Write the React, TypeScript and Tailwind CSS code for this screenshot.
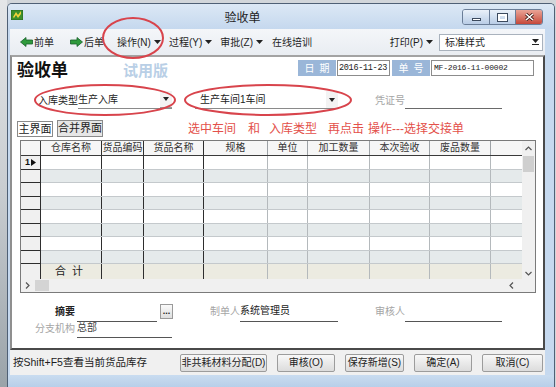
import React from "react";

const cols = [
  { w: "w-[61px]", label: "仓库名称", dark: true },
  { w: "w-[42px]", label: "货品编码", dark: true },
  { w: "w-[60px]", label: "货品名称", dark: true },
  { w: "w-[64px]", label: "规格", dark: false },
  { w: "w-[40px]", label: "单位", dark: false },
  { w: "w-[62px]", label: "加工数量", dark: false },
  { w: "w-[60px]", label: "本次验收", dark: false },
  { w: "w-[61px]", label: "废品数量", dark: false },
];

const rows = [0, 1, 2, 3, 4, 5, 6, 7];

function Caret() {
  return (
    <svg width="7" height="4" viewBox="0 0 7 4" className="ml-[3px] shrink-0">
      <path d="M0 0 H7 L3.5 4 Z" fill="#222" />
    </svg>
  );
}

function Arrow({ dir }: { dir: "left" | "right" }) {
  return (
    <svg width="13" height="10" viewBox="0 0 13 10" className="shrink-0">
      <path
        d={
          dir === "left"
            ? "M0.5 5 L6 0.5 V3 H12.5 V7 H6 V9.5 Z"
            : "M12.5 5 L7 0.5 V3 H0.5 V7 H7 V9.5 Z"
        }
        fill="#2f9a3c"
        stroke="#17602a"
        strokeWidth="0.8"
        strokeLinejoin="round"
      />
    </svg>
  );
}

function Chevron({ d }: { d: string }) {
  return (
    <svg width="7" height="5" viewBox="0 0 7 5">
      <path d={d} fill="none" stroke="#555" strokeWidth="1.2" />
    </svg>
  );
}

function TitleBar() {
  return (
    <div className="h-[25px] flex items-start bg-gradient-to-b from-[#dce8f5] to-[#c5d8ee]">
      <svg width="12" height="10" viewBox="0 0 12 10" className="ml-[3px] mt-[6px]">
        <rect x="0" y="0" width="12" height="10" fill="#3d8f2c" />
        <path d="M2 7 L5 2 L7 5 L10 1 L10 4 L7 8 L5 5 L3 8 Z" fill="#f3d23a" />
        <rect x="0" y="0" width="12" height="10" fill="none" stroke="#25601b" strokeWidth="0.8" />
      </svg>
      <div className="flex-1 text-center text-[12px] leading-[14px] mt-[7px] text-[#1e1e1e]">验收单</div>
      <div className="mt-[5px] mr-[11px] flex rounded-[3px] border border-[#6a7d97] overflow-hidden">
        <div className="w-[27px] h-[14px] bg-gradient-to-b from-[#eaf1f9] to-[#b9cde6] border-r border-[#6a7d97] flex items-end justify-center pb-[3px]">
          <div className="w-[9px] h-[3px] bg-white border border-[#3c4a5e]" />
        </div>
        <div className="w-[26px] h-[14px] bg-gradient-to-b from-[#eaf1f9] to-[#b9cde6] border-r border-[#6a7d97] flex items-center justify-center">
          <div className="w-[9px] h-[7px] border-2 border-white outline outline-1 outline-[#3c4a5e]" />
        </div>
        <div className="w-[26px] h-[14px] bg-gradient-to-b from-[#e9a396] to-[#c5473a] flex items-center justify-center">
          <svg width="9" height="8" viewBox="0 0 9 8">
            <path d="M1 1 L8 7 M8 1 L1 7" stroke="#3a1a16" strokeWidth="3" />
            <path d="M1 1 L8 7 M8 1 L1 7" stroke="#fff" strokeWidth="1.6" />
          </svg>
        </div>
      </div>
    </div>
  );
}

function Toolbar() {
  return (
    <div className="h-[26px] flex items-center bg-gradient-to-b from-[#f4f6f9] to-[#e9edf2] text-[10px] text-[#1e1e1e]">
      <div className="ml-[10px] flex items-center">
        <Arrow dir="left" />
        <span className="ml-[1px]">前单</span>
      </div>
      <div className="ml-[16px] flex items-center">
        <Arrow dir="right" />
        <span className="ml-[1px]">后单</span>
      </div>
      <div className="ml-[13px] flex items-center">
        操作(N)
        <Caret />
      </div>
      <div className="ml-[8px] flex items-center">
        过程(Y)
        <Caret />
      </div>
      <div className="ml-[8px] flex items-center">
        审批(Z)
        <Caret />
      </div>
      <div className="ml-[9px]">在线培训</div>
      <div className="ml-auto flex items-center">
        打印(P)
        <Caret />
      </div>
      <div className="ml-[6px] mr-[2px] w-[104px] h-[17px] bg-white border border-[#a9b2bd] flex items-center">
        <span className="ml-[5px] flex-1">标准样式</span>
        <div className="w-[13px] h-full flex items-center justify-center">
          <svg width="7" height="6" viewBox="0 0 7 6">
            <path d="M0 0 H7 L3.5 4 Z" fill="#222" />
            <rect x="0" y="5" width="7" height="1" fill="#222" />
          </svg>
        </div>
      </div>
    </div>
  );
}

function Grid() {
  return (
    <div className="ml-[8px] mt-[3px] w-[516px] border border-[#7a7a7a] bg-white flex flex-col text-[10px] text-[#333]">
      <div className="flex">
        <div className="w-[501px] flex flex-col">
          <div className="h-[15px] flex bg-[#f6f6f6] border-b border-[#3a3a3a]">
            <div className="w-[20px] shrink-0 border-r border-[#3a3a3a]" />
            {cols.map((c) => (
              <div
                key={c.label}
                className={`${c.w} shrink-0 border-r ${c.dark ? "border-[#2e2e2e]" : "border-[#9da2a6]"} flex items-center justify-center leading-none`}
              >
                {c.label}
              </div>
            ))}
            <div className="flex-1" />
          </div>
          {rows.map((r) => (
            <div
              key={r}
              className={`h-[13.5px] flex ${r % 2 === 0 ? "bg-white" : "bg-[#e5eaeb]"} border-b border-[#c4c9cc]`}
            >
              <div className="w-[20px] shrink-0 bg-[#f0f0f0] border-r border-[#2e2e2e] border-b border-b-[#2e2e2e] -mb-[1px] flex items-center justify-center">
                {r === 0 && (
                  <span className="flex items-center text-[9px] leading-none font-bold text-[#111]">
                    1
                    <svg width="5" height="7" viewBox="0 0 5 7" className="ml-[1px]">
                      <path d="M0 0 L5 3.5 L0 7 Z" fill="#111" />
                    </svg>
                  </span>
                )}
              </div>
              {cols.map((c) => (
                <div
                  key={c.label}
                  className={`${c.w} shrink-0 border-r ${c.dark ? "border-[#2e2e2e]" : "border-[#b4b9bc]"}`}
                />
              ))}
              <div className="flex-1" />
            </div>
          ))}
          <div className="h-[15px] flex bg-[#ecebe1]">
            <div className="w-[20px] shrink-0 bg-[#f0f0f0] border-r border-[#2e2e2e]" />
            {cols.map((c, i) => (
              <div
                key={c.label}
                className={`${c.w} shrink-0 border-r ${c.dark ? "border-[#2e2e2e]" : "border-[#b4b9bc]"} flex items-center`}
              >
                {i === 0 && <span className="ml-[14px] text-[11px] tracking-[6px] text-[#222]">合计</span>}
              </div>
            ))}
            <div className="flex-1" />
          </div>
        </div>
        <div className="w-[13px] flex flex-col items-center bg-[#f0f0f0]">
          <div className="h-[15px] flex items-center">
            <Chevron d="M0.5 4 L3.5 1 L6.5 4" />
          </div>
          <div className="w-[11px] h-[16px] bg-[#cfcfcf]" />
          <div className="flex-1" />
          <div className="h-[12px] flex items-center">
            <Chevron d="M0.5 1 L3.5 4 L6.5 1" />
          </div>
        </div>
      </div>
      <div className="h-[13px] flex items-center bg-[#f0f0f0]">
        <div className="ml-[3px] rotate-[-90deg]">
          <Chevron d="M0.5 1 L3.5 4 L6.5 1" />
        </div>
        <div className="ml-[4px] w-[14px] h-[11px] bg-[#d4d4d4]" />
        <div className="flex-1" />
        <div className="mr-[20px] rotate-90">
          <Chevron d="M0.5 1 L3.5 4 L6.5 1" />
        </div>
      </div>
    </div>
  );
}

function FormPanel() {
  return (
    <div className="flex-1 flex flex-col bg-white border-2 border-t-[#a3a3a3] border-l-[#8f8f8f] border-b-[#4a4a4a] border-r-[#4a4a4a] text-[10px] text-[#222]">
      {/* header */}
      <div className="mt-[1px] h-[24px] flex items-center">
        <span className="ml-[5px] text-[17px] font-bold leading-none text-[#111]">验收单</span>
        <span className="ml-[55px] text-[15px] font-bold leading-none text-[#b9cfe6]">试用版</span>
        <div className="ml-auto mr-[9px] self-start mt-[2px] flex h-[16px]">
          <div className="w-[38px] bg-[#9ab6d8] text-white flex items-center justify-center tracking-[5px] pl-[5px]">日期</div>
          <div className="ml-[1px] w-[53px] bg-white border border-[#8c8c8c] flex items-center pl-[1px] font-['Liberation_Mono',monospace] text-[8.5px] tracking-[-0.3px]">
            2016-11-23
          </div>
          <div className="ml-[2px] w-[38px] bg-[#9ab6d8] text-white flex items-center justify-center tracking-[5px] pl-[5px]">单号</div>
          <div className="ml-[1px] w-[103px] bg-white border border-[#8c8c8c] flex items-center pl-[2px] font-['Liberation_Mono',monospace] text-[8px] tracking-[-0.2px]">
            MF-2016-11-00002
          </div>
        </div>
      </div>
      {/* type row */}
      <div className="mt-[9px] h-[18px] flex items-center">
        <span className="ml-[26px] w-[40px] text-[10px]">入库类型</span>
        <div className="w-[94px] h-full flex items-center border-b border-[#8a8a8a]">
          <span className="flex-1">生产入库</span>
          <div className="w-[12px] h-full flex items-center justify-center bg-[#f3f3f3] border-b border-[#9a9a9a]">
            <svg width="6" height="4" viewBox="0 0 6 4">
              <path d="M0 0 H6 L3 4 Z" fill="#222" />
            </svg>
          </div>
        </div>
        <div className="ml-[23px] w-[143px] h-full flex items-center border-b border-[#8a8a8a]">
          <span className="ml-[5px] flex-1">生产车间1车间</span>
          <div className="w-[12px] h-full flex items-center justify-center bg-[#f3f3f3]">
            <svg width="6" height="4" viewBox="0 0 6 4">
              <path d="M0 0 H6 L3 4 Z" fill="#222" />
            </svg>
          </div>
        </div>
        <span className="ml-[37px] w-[30px] text-[#a5a5a5]">凭证号</span>
        <div className="w-[97px] h-full border-b border-[#6a6a6a]" />
      </div>
      {/* tabs */}
      <div className="mt-[10px] h-[18px] flex items-end">
        <div className="ml-[5px] w-[36px] h-[16px] bg-white border border-[#8a8a8a] flex items-center justify-center text-[11px]">主界面</div>
        <div className="ml-[4px] w-[46px] h-[17px] bg-[#e6e6e6] border border-[#8a8a8a] flex items-center justify-center text-[11px]">合并界面</div>
        <div className="ml-[85px] h-[17px] flex items-center text-[12px] text-[#e3504a] leading-none">
          <span>选中车间</span>
          <span className="ml-[12px]">和</span>
          <span className="ml-[9px]">入库类型</span>
          <span className="ml-[11px]">再点击</span>
          <span className="ml-[4px]">操作---选择交接单</span>
        </div>
      </div>
      <Grid />
      {/* bottom fields */}
      <div className="mt-[11px] h-[18px] flex items-end">
        <span className="ml-[43px] w-[22px] pb-[3px] font-bold text-[#222]">摘要</span>
        <div className="w-[80px] h-full border-b border-[#555]" />
        <div className="ml-[3px] mb-[2px] w-[13px] h-[15px] self-start bg-gradient-to-b from-[#fafafa] to-[#dedede] border border-[#9a9a9a] flex items-center justify-center text-[9px] leading-none font-bold">
          ...
        </div>
        <span className="ml-[37px] w-[30px] pb-[3px] text-[#a5a5a5]">制单人</span>
        <div className="w-[98px] h-full border-b border-[#555] flex items-end pb-[3px]">系统管理员</div>
        <span className="ml-[37px] w-[30px] pb-[3px] text-[#a5a5a5]">审核人</span>
        <div className="w-[97px] h-full border-b border-[#555]" />
      </div>
      <div className="h-[16px] flex items-end">
        <span className="ml-[23px] w-[42px] pb-[2px] text-[#a5a5a5]">分支机构</span>
        <div className="w-[95px] h-full border-b border-[#555] flex items-end pb-[2px] text-[#444]">总部</div>
      </div>
    </div>
  );
}

function Btn({ w, label }: { w: string; label: string }) {
  return (
    <div
      className={`${w} h-[18px] bg-gradient-to-b from-[#f8f8f8] to-[#dcdcdc] border border-[#9c9c9c] rounded-[2px] flex items-center justify-center text-[10px] text-[#222]`}
    >
      {label}
    </div>
  );
}

function StatusBar() {
  return (
    <div className="h-[25px] flex items-center text-[10.5px] text-[#1e1e1e]">
      <span className="ml-[3px]">按Shift+F5查看当前货品库存</span>
      <div className="ml-auto mr-[2px] flex items-center gap-[10px]">
        <Btn w="w-[87px]" label="非共耗材料分配(D)" />
        <Btn w="w-[58px]" label="审核(O)" />
        <Btn w="w-[59px]" label="保存新增(S)" />
        <Btn w="w-[58px]" label="确定(A)" />
        <Btn w="w-[61px]" label="取消(C)" />
      </div>
    </div>
  );
}

export default function App() {
  return (
    <div className="relative w-[556px] h-[387px] overflow-hidden flex bg-[#d2d6da] font-['Liberation_Sans','Noto_Sans_CJK_SC',sans-serif]">
      <div className="w-[7px] shrink-0 bg-gradient-to-b from-[#e4e6e8] via-[#c8ccd0] to-[#9aa3a9]" />
      <div className="flex-1 mt-[3px] mr-[1px] flex flex-col rounded-t-[5px] border border-b-0 border-[#4f6075] bg-[#c6d9ef] overflow-hidden">
        <TitleBar />
        <div className="flex-1 ml-[2px] mr-[9px] flex flex-col bg-[#f0f0f0]">
          <Toolbar />
          <FormPanel />
          <StatusBar />
        </div>
        <div className="h-[12px] bg-gradient-to-b from-[#c9dcf0] to-[#b8cfe9]" />
      </div>
      {/* red annotation ovals */}
      <svg className="absolute left-0 top-0 pointer-events-none" width="556" height="387" viewBox="0 0 556 387">
        <ellipse cx="133" cy="38" rx="30" ry="20" fill="none" stroke="#d8444c" strokeWidth="2" />
        <ellipse cx="105" cy="100" rx="70" ry="15" fill="none" stroke="#d8444c" strokeWidth="2" />
        <ellipse cx="268" cy="100" rx="83" ry="15" fill="none" stroke="#d8444c" strokeWidth="2" />
      </svg>
    </div>
  );
}
